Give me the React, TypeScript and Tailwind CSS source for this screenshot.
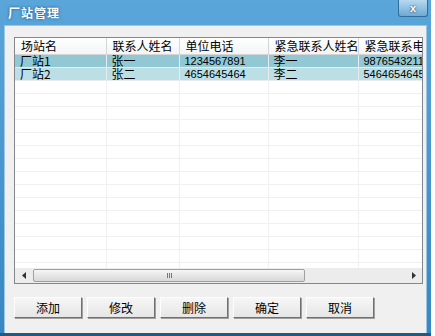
import React from 'react';

const cols = [
  { title: '场站名', w: 91 },
  { title: '联系人姓名', w: 73 },
  { title: '单位电话', w: 89 },
  { title: '紧急联系人姓名', w: 90 },
  { title: '紧急联系电话', w: 80 },
];

const rows = [
  ['厂站1', '张一', '1234567891', '李一', '9876543211'],
  ['厂站2', '张二', '4654645464', '李二', '5464654645'],
];

const cjk = { fontFamily: '"Noto Sans CJK SC", "Liberation Sans", sans-serif' };
const num = { fontFamily: '"Liberation Sans", "DejaVu Sans", sans-serif' };

const App: React.FC = () => {
  const emptyRows = Array.from({ length: 15 });

  return (
    <div className="w-[435px] h-[336px] bg-white">
      <div className="w-[431px] h-[336px] flex flex-col bg-gradient-to-b from-[#5aa6da] to-[#3787c2] border-b-[3px] border-[#1f5a86]">
        {/* title bar */}
        <div className="relative h-[25px] shrink-0 flex items-center pl-[8px]">
          <span className="text-white text-[12px] font-bold tracking-[1px] [text-shadow:0_0_3px_#1b4d78]" style={cjk}>
            厂站管理
          </span>
          <div className="absolute right-[3px] top-0 w-[30px] h-[17px] rounded-b-[3px] border border-t-0 border-[#2f6d9c] bg-gradient-to-b from-[#b7d9ef] to-[#6ea9d4] flex items-center justify-center">
            <span className="text-white text-[11px] font-bold leading-none [text-shadow:0_0_2px_#123]" style={num}>x</span>
          </div>
        </div>

        {/* client area */}
        <div className="flex-1 mx-[4px] bg-[#f0f0f0] pl-[9px] pt-[11px] border border-b-0 border-[#9cc5e2]">
          <div className="w-[409px] h-[247px] border border-[#828790] bg-white flex flex-col">
            <div className="flex-1 overflow-hidden">
              <table className="w-[423px] min-w-[423px] table-fixed border-collapse text-[12px] text-black">
                <colgroup>
                  {cols.map((c) => (
                    <col key={c.title} style={{ width: c.w }} />
                  ))}
                </colgroup>
                <thead>
                  <tr className="h-[16px] bg-gradient-to-b from-white to-[#f3f4f6]">
                    {cols.map((c) => (
                      <th
                        key={c.title}
                        className="h-[16px] p-0 text-left font-normal pl-[6px] border-r border-b border-[#d5d5d5] whitespace-nowrap overflow-hidden leading-[15px] text-[12px]"
                        style={cjk}
                      >
                        {c.title}
                      </th>
                    ))}
                  </tr>
                </thead>
                <tbody>
                  {rows.map((r, i) => (
                    <tr key={i} className={i === 0 ? 'bg-[#92c8d4]' : 'bg-[#bcdfe6]'}>
                      {r.map((cell, j) => {
                        const isNum = /^\d+$/.test(cell);
                        return (
                          <td
                            key={j}
                            className={`h-[13px] p-0 pl-[5px] border-r border-b border-[#e8ecee] whitespace-nowrap overflow-hidden leading-[12px] ${
                              isNum ? 'text-[11px]' : 'text-[12px]'
                            }`}
                            style={isNum ? num : cjk}
                          >
                            <div className="h-[12px] overflow-visible leading-[12px]">{cell}</div>
                          </td>
                        );
                      })}
                    </tr>
                  ))}
                  {emptyRows.map((_, i) => (
                    <tr key={`e${i}`}>
                      {cols.map((c) => (
                        <td key={c.title} className="h-[13px] p-0 border-r border-b border-[#f0f0f0]" />
                      ))}
                    </tr>
                  ))}
                </tbody>
              </table>
            </div>

            {/* horizontal scrollbar */}
            <div className="h-[15px] shrink-0 bg-[#ececec] flex items-center">
              <div className="w-[17px] h-[15px] flex items-center justify-center">
                <svg width="4" height="7" viewBox="0 0 4 7">
                  <path d="M4 0 L0 3.5 L4 7 Z" fill="#333" />
                </svg>
              </div>
              <div className="w-[272px] h-[13px] ml-[1px] rounded-[2px] border border-[#a0a0a0] bg-gradient-to-b from-[#f6f6f6] to-[#d8d8d8] flex items-center justify-center">
                <div className="flex gap-[1px]">
                  <div className="w-[1px] h-[5px] bg-[#777]" />
                  <div className="w-[1px] h-[5px] bg-[#777]" />
                  <div className="w-[1px] h-[5px] bg-[#777]" />
                </div>
              </div>
              <div className="flex-1" />
              <div className="w-[17px] h-[15px] flex items-center justify-center">
                <svg width="4" height="7" viewBox="0 0 4 7">
                  <path d="M0 0 L4 3.5 L0 7 Z" fill="#333" />
                </svg>
              </div>
            </div>
          </div>

          {/* buttons */}
          <div className="flex gap-[5px] mt-[13px]">
            {['添加', '修改', '删除', '确定', '取消'].map((b) => (
              <button
                key={b}
                className="w-[68px] h-[21px] bg-gradient-to-b from-[#f6f6f6] to-[#e6e6e6] border border-t-[#fdfdfd] border-l-[#fdfdfd] border-r-[#707070] border-b-[#707070] shadow-[1px_1px_0_#a0a0a0] text-[12px] text-black leading-none"
                style={cjk}
              >
                {b}
              </button>
            ))}
          </div>
        </div>
      </div>
    </div>
  );
};

export default App;
